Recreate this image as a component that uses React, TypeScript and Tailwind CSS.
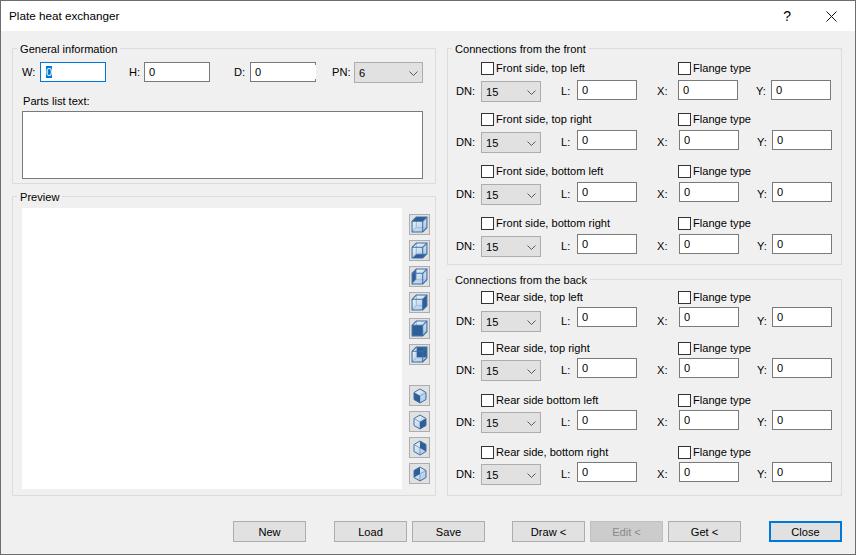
import React from 'react';

const font = 'font-["Liberation_Sans",Arial,sans-serif]';

type Face = 'top' | 'bottom' | 'left' | 'right' | 'front' | 'back';

const cubeFaces: Record<Face, string> = {
  top: '1,5 5,1 15,1 11,5',
  bottom: '1,15 5,11 15,11 11,15',
  left: '1,5 5,1 5,11 1,15',
  right: '11,5 15,1 15,11 11,15',
  front: '1,5 11,5 11,15 1,15',
  back: '5,1 15,1 15,11 5,11',
};

function CubeIcon({ face }: { face: Face }) {
  const hidden = face === 'back' || face === 'left' || face === 'bottom';
  const backLines = <path d="M5 1V11H15M5 11L1 15" fill="none" stroke="#9dbbd9" strokeWidth="1" />;
  return (
    <svg width="17" height="17" viewBox="0 0 16 16">
      <defs>
        <linearGradient id="cubeLight" x1="0" y1="0" x2="1" y2="1">
          <stop offset="0" stopColor="#f8fbfe" />
          <stop offset="1" stopColor="#a3c2e2" />
        </linearGradient>
      </defs>
      <polygon points="1,5 5,1 15,1 15,11 11,15 1,15" fill="url(#cubeLight)" />
      {!hidden && backLines}
      <polygon points={cubeFaces[face]} fill="#2c5f98" />
      {hidden && backLines}
      <path d="M1 5H11V15M11 5L15 1" fill="none" stroke="#3f6fa5" strokeWidth="1" />
      <polygon points="1,5 5,1 15,1 15,11 11,15 1,15" fill="none" stroke="#3f6fa5" strokeWidth="1" />
    </svg>
  );
}

const isoFaces = [
  '8,8 2,4.5 2,11.5 8,15',
  '8,8 14,4.5 14,11.5 8,15',
  '8,1 14,4.5 14,11.5 8,8',
  '8,1 2,4.5 2,11.5 8,8',
];

function IsoIcon({ index }: { index: number }) {
  return (
    <svg width="16" height="16" viewBox="0 0 16 16">
      <defs>
        <linearGradient id="isoLight" x1="0" y1="0" x2="1" y2="1">
          <stop offset="0" stopColor="#f4f8fc" />
          <stop offset="1" stopColor="#a3c2e2" />
        </linearGradient>
      </defs>
      <polygon points="8,1 14,4.5 14,11.5 8,15 2,11.5 2,4.5" fill="url(#isoLight)" />
      <path d="M2 4.5L8 8L14 4.5M8 8V15" fill="none" stroke="#7ea3ca" strokeWidth="1" />
      <polygon points={isoFaces[index]} fill="#2c5f98" />
      <polygon points="8,1 14,4.5 14,11.5 8,15 2,11.5 2,4.5" fill="none" stroke="#3f6fa5" strokeWidth="1" />
    </svg>
  );
}

function IconButton({ children, className = '' }: { children: React.ReactNode; className?: string }) {
  return (
    <button type="button" className={`w-[21px] h-[21px] bg-[#e1e1e1] border border-[#adadad] flex items-center justify-center shrink-0 ${className}`}>
      {children}
    </button>
  );
}

function Chevron() {
  return (
    <svg width="9" height="5" viewBox="0 0 9 5" className="absolute right-[4px] top-[8px]">
      <path d="M0.5 0.5L4.5 4.5L8.5 0.5" fill="none" stroke="#5a5a5a" strokeWidth="1" />
    </svg>
  );
}

function Select({ value, className = '' }: { value: string; className?: string }) {
  return (
    <div className={`relative h-[21px] bg-[#e1e1e1] border border-[#adadad] pl-[4px] leading-[20px] shrink-0 ${className}`}>
      {value}
      <Chevron />
    </div>
  );
}

function TextBox({ className = '' }: { className?: string }) {
  return (
    <div className={`h-[20px] bg-white border border-[#7a7a7a] pl-[4px] leading-[18px] shrink-0 ${className}`}>0</div>
  );
}

function Group({ title, className = '', children }: { title: string; className?: string; children: React.ReactNode }) {
  return (
    <div className={`relative border border-[#dcdcdc] ${className}`}>
      <span className="absolute left-[4px] top-[-8px] bg-[#f0f0f0] px-[3px] leading-[16px]">{title}</span>
      {children}
    </div>
  );
}

function Check({ label, className = '' }: { label: string; className?: string }) {
  return (
    <div className={`flex items-center h-[13px] ${className}`}>
      <span className="w-[13px] h-[13px] bg-white border border-[#333] shrink-0" />
      <span className="ml-[2px] leading-[13px] whitespace-nowrap">{label}</span>
    </div>
  );
}

type RowSpec = { label: string; top: string; gap: string; selectTop: string; xLabel: string; yLabel: string };

function ConnectionRow({ label, top, gap, selectTop, xLabel, yLabel }: RowSpec) {
  return (
    <div className={top}>
      <div className="flex pl-[25px]">
        <Check label={label} className="w-[197px]" />
        <Check label="Flange type" />
      </div>
      <div className={`flex items-start h-[20px] leading-[20px] ${gap}`}>
        <span className={`w-[25px] ${selectTop}`}>DN:</span>
        <Select value="15" className={`w-[60px] ${selectTop}`} />
        <span className={`ml-[20px] w-[16px] ${selectTop}`}>L:</span>
        <TextBox className="w-[60px]" />
        <span className={`ml-[20px] ${xLabel} ${selectTop}`}>X:</span>
        <TextBox className="w-[60px]" />
        <span className={`ml-[18px] ${yLabel} ${selectTop}`}>Y:</span>
        <TextBox className="w-[60px]" />
      </div>
    </div>
  );
}

const frontRows: RowSpec[] = [
  { label: 'Front side, top left', top: 'mt-[13px]', gap: 'mt-[5px]', selectTop: 'mt-[1px]', xLabel: 'w-[21px]', yLabel: 'w-[15px]' },
  { label: 'Front side, top right', top: 'mt-[13px]', gap: 'mt-[4px]', selectTop: 'mt-[2px]', xLabel: 'w-[22px]', yLabel: 'w-[15px]' },
  { label: 'Front side, bottom left', top: 'mt-[15px]', gap: 'mt-[4px]', selectTop: 'mt-[2px]', xLabel: 'w-[22px]', yLabel: 'w-[15px]' },
  { label: 'Front side, bottom right', top: 'mt-[15px]', gap: 'mt-[4px]', selectTop: 'mt-[2px]', xLabel: 'w-[22px]', yLabel: 'w-[15px]' },
];

const backRows: RowSpec[] = [
  { label: 'Rear side, top left', top: 'mt-[11px]', gap: 'mt-[3px]', selectTop: 'mt-[4px]', xLabel: 'w-[22px]', yLabel: 'w-[15px]' },
  { label: 'Rear side, top right', top: 'mt-[15px]', gap: 'mt-[3px]', selectTop: 'mt-[2px]', xLabel: 'w-[22px]', yLabel: 'w-[15px]' },
  { label: 'Rear side bottom left', top: 'mt-[16px]', gap: 'mt-[3px]', selectTop: 'mt-[2px]', xLabel: 'w-[22px]', yLabel: 'w-[15px]' },
  { label: 'Rear side, bottom right', top: 'mt-[16px]', gap: 'mt-[3px]', selectTop: 'mt-[2px]', xLabel: 'w-[22px]', yLabel: 'w-[15px]' },
];

function ActionButton({ label, className = '' }: { label: string; className?: string }) {
  return (
    <button type="button" className={`w-[73px] h-[21px] bg-[#e1e1e1] border border-[#adadad] leading-[18px] ${className}`}>
      {label}
    </button>
  );
}

export default function App() {
  return (
    <div className={`w-[856px] h-[555px] bg-[#f0f0f0] border border-[#6d6d6d] flex flex-col text-[11.1px] text-black overflow-hidden ${font}`}>
      <div className="h-[30px] bg-white flex items-center pl-[8px] shrink-0">
        <span className="text-[11.7px]">Plate heat exchanger</span>
        <span className="ml-auto mr-[35px] text-[14px]">?</span>
        <svg width="11" height="11" viewBox="0 0 11 11" className="mr-[18px]">
          <path d="M0.5 0.5L10.5 10.5M10.5 0.5L0.5 10.5" stroke="#111" strokeWidth="1" fill="none" />
        </svg>
      </div>

      <div className="flex pl-[11px] pt-[17px] h-[465px] shrink-0">
        <div className="w-[424px] flex flex-col">
          <Group title="General information" className="h-[136px] pl-[9px] pt-[13px]">
            <div className="flex items-start leading-[20px]">
              <span className="w-[18px]">W:</span>
              <div className="w-[66px] h-[20px] bg-white border border-[#0078d7] pl-[5px] leading-[18px]">
                <span className="bg-[#0078d7] text-white">0</span>
              </div>
              <span className="ml-[23px] w-[15px]">H:</span>
              <TextBox className="w-[66px]" />
              <span className="ml-[24px] w-[16px]">D:</span>
              <div className="relative shrink-0">
                <TextBox className="w-[66px] border-r-white" />
                <span className="absolute right-0 top-0 w-px h-[3px] bg-[#7a7a7a]" />
                <span className="absolute right-0 bottom-0 w-px h-[3px] bg-[#7a7a7a]" />
              </div>
              <span className="ml-[16px] w-[22px]">PN:</span>
              <Select value="6" className="w-[69px]" />
            </div>
            <div className="mt-[8px] ml-[1px] leading-[20px]">Parts list text:</div>
            <div className="w-[401px] h-[68px] bg-white border border-[#7a7a7a]" />
          </Group>
          <Group title="Preview" className="mt-[12px] h-[300px] pl-[9px] pt-[11px]">
            <div className="flex">
              <div className="w-[380px] h-[281px] bg-white" />
              <div className="ml-[7px] pt-[6px] flex flex-col">
                <div className="flex flex-col gap-[5px]">
                  {(['top', 'bottom', 'left', 'right', 'front', 'back'] as Face[]).map((f) => (
                    <IconButton key={f}><CubeIcon face={f} /></IconButton>
                  ))}
                </div>
                <div className="mt-[20px] flex flex-col gap-[5px]">
                  {[0, 1, 2, 3].map((i) => (
                    <IconButton key={i}><IsoIcon index={i} /></IconButton>
                  ))}
                </div>
              </div>
            </div>
          </Group>
        </div>

        <div className="ml-[11px] w-[395px] flex flex-col">
          <Group title="Connections from the front" className="h-[217px] pl-[8px]">
            {frontRows.map((r) => <ConnectionRow key={r.label} {...r} />)}
          </Group>
          <Group title="Connections from the back" className="mt-[14px] h-[217px] pl-[8px]">
            {backRows.map((r) => <ConnectionRow key={r.label} {...r} />)}
          </Group>
        </div>
      </div>

      <div className="flex pl-[232px] pt-[25px]">
        <ActionButton label="New" />
        <ActionButton label="Load" className="ml-[28px]" />
        <ActionButton label="Save" className="ml-[5px]" />
        <ActionButton label="Draw <" className="ml-[27px]" />
        <ActionButton label="Edit <" className="ml-[5px] !bg-[#cccccc] !border-[#bfbfbf] text-[#8a8a8a]" />
        <ActionButton label="Get <" className="ml-[5px]" />
        <ActionButton label="Close" className="ml-[28px] !border-2 !border-[#0078d7]" />
      </div>
    </div>
  );
}
